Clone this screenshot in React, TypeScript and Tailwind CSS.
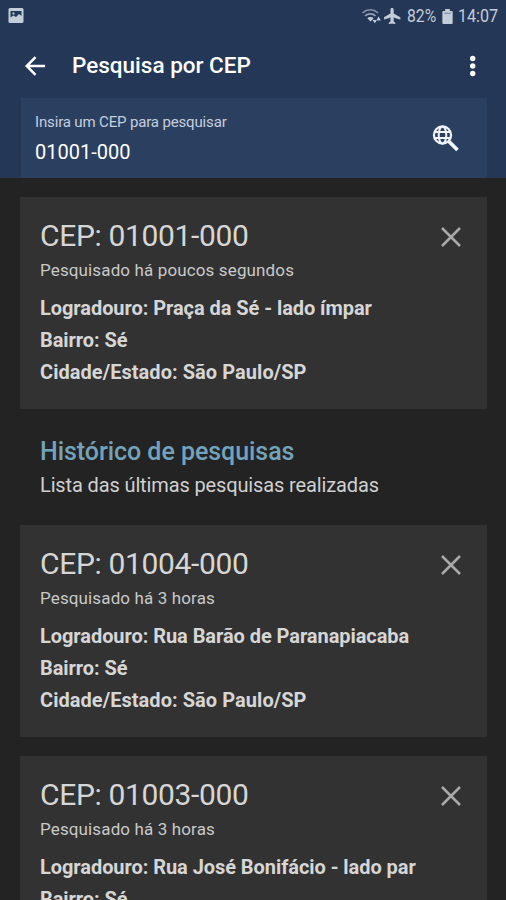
import React from "react";

interface IProps {
  cep: string;
  searchedAt: string;
  street: string;
  district: string;
  city: string;
}

const history: IProps[] = [
  {
    cep: "01004-000",
    searchedAt: "Pesquisado há 3 horas",
    street: "Rua Barão de Paranapiacaba",
    district: "Sé",
    city: "São Paulo/SP",
  },
  {
    cep: "01003-000",
    searchedAt: "Pesquisado há 3 horas",
    street: "Rua José Bonifácio - lado par",
    district: "Sé",
    city: "São Paulo/SP",
  },
];

const StatusBar = () => {
  return (
    <div className="flex h-8 items-center justify-between pl-2 pr-[9px] text-[#c3ccd9]">
      <svg className="mb-0.5" width={16} height={15} viewBox="0 0 16 15">
        <rect x="0.5" y="0" width="15" height="15" rx="1.5" fill="currentColor" />
        <path d="M2.500 9.500V3h11v5l-2.500-2-3 3-2.500-1.500z" fill="#243757" />
        <path d="M4.500 4.500h2v2h-2z" fill="currentColor" />
      </svg>
      <div className="flex items-center">
        <svg className="-mr-0.5" width={20} height={16} viewBox="0 0 20 16" fill="none">
          <path d="M0.500 4.800C5 .8 11.500 .8 16 4.800" stroke="currentColor" strokeWidth="1.600" opacity="0.6" />
          <path d="M3 7.800c3-2.600 7.500-2.600 10.500 0" stroke="currentColor" strokeWidth="1.600" opacity="0.7" />
          <path d="M5.300 10.200c2-1.700 4.400-1.700 6.400 0L8.500 13.500z" fill="currentColor" />
          <path d="M10.500 12h4.500l-2.200 3.200zM14.300 12.500h4.500l-2.200-4z" fill="currentColor" />
        </svg>
        <svg className="ml-1 mr-0.5" width={17} height={16} viewBox="2 2 20 20" preserveAspectRatio="none">
          <path
            d="M21 16v-2l-8-5V3.500c0-.83-.67-1.500-1.500-1.500S10 2.670 10 3.500V9l-8 5v2l8-2.500V19l-2 1.500V22l3.500-1 3.500 1v-1.500L13 19v-5.500l8 2.500z"
            fill="currentColor"
            stroke="currentColor"
            strokeWidth="0.700"
          />
        </svg>
        <span className="ml-1 w-[29px] origin-left scale-x-[0.85] whitespace-nowrap text-[18.500px] leading-none">
          82%
        </span>
        <svg className="ml-1.5" width={11} height={15} viewBox="0 0 11 16">
          <path d="M3 0h5v2h2q1 0 1 1v12q0 1-1 1H1q-1 0-1-1V3q0-1 1-1h2z" fill="currentColor" />
          <path d="M2 4.500h7" stroke="#6f7d94" />
        </svg>
        <span className="ml-[5px] w-[39px] origin-left scale-x-[0.87] whitespace-nowrap text-[18.500px] leading-none">
          14:07
        </span>
      </div>
    </div>
  );
};

const AppBar = () => {
  return (
    <div className="flex h-[66px] items-center pl-[25px] pr-[29px] text-white">
      <svg className="mt-px" width={20} height={20} viewBox="0 0 20 20" fill="none">
        <path d="M10.500 1.200 1.700 10l8.800 8.800M1.700 10H20" stroke="currentColor" strokeWidth="2.500" />
      </svg>
      <h1 className="ml-[27px] flex-1 text-[22.500px] font-medium leading-7">
        Pesquisa por CEP
      </h1>
      <svg className="mt-px" width={8} height={22} viewBox="0 0 8 22" fill="currentColor">
        <circle cx="3.700" cy="3.500" r="2.700" />
        <circle cx="3.700" cy="11" r="2.700" />
        <circle cx="3.700" cy="18.500" r="2.700" />
      </svg>
    </div>
  );
};

const SearchField = () => {
  return (
    <div className="ml-[21px] mr-[19px] flex h-20 items-start justify-between bg-[#2b4061] pl-3.5 pr-7 pt-3">
      <div>
        <p className="text-[15px] leading-6 tracking-[-0.15px] text-[#c5cedd]">
          Insira um CEP para pesquisar
        </p>
        <p className="mt-1.5 text-[20px] leading-6 text-white">01001-000</p>
      </div>
      <svg className="mt-[15px]" width={27} height={27} viewBox="0 0 27 27" fill="none" stroke="#f1f5fb">
        <circle cx="10.500" cy="10" r="8.600" strokeWidth="2.200" />
        <ellipse cx="10.500" cy="10" rx="3.800" ry="8.500" strokeWidth="2" />
        <path d="M3 6.900h15M3 13.100h15" strokeWidth="2" />
        <path d="m17 16.500 8.500 8.500" strokeWidth="3.800" />
      </svg>
    </div>
  );
};

const CepCard = ({ cep, searchedAt, street, district, city }: IProps) => {
  return (
    <div className="flex h-[212px] shrink-0 items-start justify-between bg-[#323232] pl-5 pr-[26px] pt-[19px] text-[#d6d6d6]">
      <div className="whitespace-nowrap">
        <h2 className="text-[30px] leading-10 tracking-[-0.35px]">CEP: {cep}</h2>
        <p className="text-[17px] leading-7 tracking-[0.130px] text-[#c9c9c9]">{searchedAt}</p>
        <div className="mt-2 text-[20px] font-bold leading-8 tracking-[-0.060px]">
          <p>Logradouro: {street}</p>
          <p>Bairro: {district}</p>
          <p className="tracking-[0.050px]">Cidade/Estado: {city}</p>
        </div>
      </div>
      <button type="button" className="mt-[11px] cursor-pointer">
        <svg width={20} height={20} viewBox="0 0 20 20">
          <path d="m1 1 18 18M19 1 1 19" stroke="#a9a9a9" strokeWidth="2.500" />
        </svg>
      </button>
    </div>
  );
};

const App = () => {
  return (
    <div className="flex h-[900px] w-[506px] flex-col overflow-hidden bg-[#232323] font-['Roboto',sans-serif]">
      <header className="h-[178px] shrink-0 bg-[#243757]">
        <StatusBar />
        <AppBar />
        <SearchField />
      </header>
      <main className="flex flex-col pl-5 pr-[19px] pt-[19px]">
        <CepCard
          cep="01001-000"
          searchedAt="Pesquisado há poucos segundos"
          street="Praça da Sé - lado ímpar"
          district="Sé"
          city="São Paulo/SP"
        />
        <section className="h-[116px] shrink-0 pl-5 pt-[25px]">
          <h2 className="text-[25px] font-medium leading-9 tracking-[-0.050px] text-[#73a3bb]">
            Histórico de pesquisas
          </h2>
          <p className="text-[20px] leading-[31px] tracking-[-0.130px] text-[#d0d0d0]">
            Lista das últimas pesquisas realizadas
          </p>
        </section>
        <div className="flex flex-col gap-[19px]">
          {history.map((item) => (
            <CepCard key={item.cep} {...item} />
          ))}
        </div>
      </main>
    </div>
  );
};

export default App;
